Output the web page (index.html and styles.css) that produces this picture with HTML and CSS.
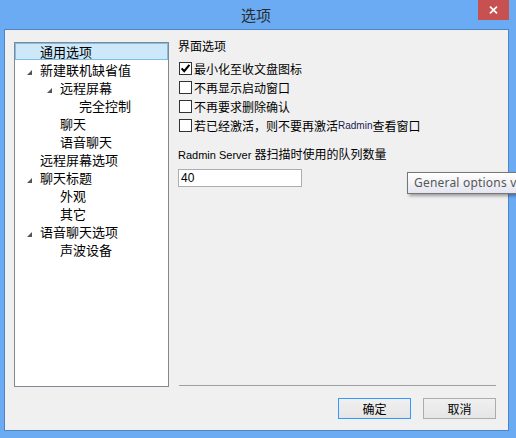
FILE: index.html
```html
<!DOCTYPE html>
<html>
<head>
<meta charset="utf-8">
<link rel="stylesheet" href="styles.css">
</head>
<body>
<div class="window">
  <div class="titlebar">
    <div class="title">选项</div>
    <div class="close"><svg width="9" height="8" viewBox="0 0 9 8"><path d="M1 0.7 L8 7.3 M8 0.7 L1 7.3" stroke="#fff" stroke-width="1.7" fill="none"/></svg></div>
  </div>
  <div class="client">
    <div class="main">
      <div class="tree">
        <div class="node lvl0 sel"><span class="exp"></span>通用选项</div>
        <div class="node lvl0"><span class="exp open"></span>新建联机缺省值</div>
        <div class="node lvl1"><span class="exp open"></span>远程屏幕</div>
        <div class="node lvl2"><span class="exp"></span>完全控制</div>
        <div class="node lvl1"><span class="exp"></span>聊天</div>
        <div class="node lvl1"><span class="exp"></span>语音聊天</div>
        <div class="node lvl0"><span class="exp"></span>远程屏幕选项</div>
        <div class="node lvl0"><span class="exp open"></span>聊天标题</div>
        <div class="node lvl1"><span class="exp"></span>外观</div>
        <div class="node lvl1"><span class="exp"></span>其它</div>
        <div class="node lvl0"><span class="exp open"></span>语音聊天选项</div>
        <div class="node lvl1"><span class="exp"></span>声波设备</div>
      </div>
      <div class="panel">
        <div class="heading">界面选项</div>
        <div class="checks">
          <div class="check"><span class="box"><svg width="11" height="11" viewBox="0 0 11 11"><path d="M1.6 5.4 L4.2 8.2 L9.4 1.8" stroke="#000" stroke-width="2.1" fill="none"/></svg></span>最小化至收文盘图标</div>
          <div class="check"><span class="box"></span>不再显示启动窗口</div>
          <div class="check"><span class="box"></span>不再要求删除确认</div>
          <div class="check"><span class="box"></span>若已经激活，则不要再激活<span class="mini">Radmin</span>查看窗口</div>
        </div>
        <div class="qlabel"><span class="latin">Radmin Server </span>器扫描时使用的队列数量</div>
        <div class="input">40</div>
        <div class="sep"></div>
      </div>
    </div>
    <div class="buttons">
      <div class="btn default">确定</div>
      <div class="btn">取消</div>
    </div>
  </div>
  <div class="tooltip">General options v</div>
</div>
</body>
</html>
```
FILE: styles.css
```css
html, body {
  margin: 0;
  padding: 0;
}
body {
  width: 516px;
  height: 438px;
  overflow: hidden;
  background: #6aabf4;
  font-family: "Noto Sans CJK SC", sans-serif;
  color: #000;
}
.window {
  position: relative;
  height: 438px;
  display: flex;
  flex-direction: column;
}
.titlebar {
  height: 29px;
  display: grid;
  grid-template-columns: 1fr auto 1fr;
  align-items: start;
}
.title {
  grid-column: 2;
  font-size: 15px;
  line-height: 15px;
  margin-top: 7px;
  margin-right: 4px;
  color: #2b2b2b;
}
.close {
  grid-column: 3;
  justify-self: end;
  width: 31px;
  height: 20px;
  margin-right: 7px;
  background: #c75050;
  display: flex;
  align-items: center;
  justify-content: center;
}
.client {
  margin: 0 7px 0 4px;
  height: 402px;
  box-sizing: border-box;
  border: 1px solid #4f85c5;
  background: #f0f0f0;
  padding: 8px 12px 0 9px;
}
.main {
  display: flex;
  align-items: flex-start;
}
.tree {
  width: 155px;
  height: 345px;
  box-sizing: border-box;
  border: 1px solid #828790;
  background: #fff;
  margin-top: 4px;
  flex: none;
}
.node {
  height: 18px;
  line-height: 18px;
  font-size: 13px;
  white-space: nowrap;
  box-sizing: border-box;
  display: flex;
}
.node.lvl0 { padding-left: 12px; }
.node.lvl1 { padding-left: 32px; }
.node.lvl2 { padding-left: 51px; }
.node.sel {
  background: #cde8f8;
  border: 1px solid #7fbde6;
  line-height: 16px;
  height: 17px;
  margin-bottom: 1px;
  padding-left: 11px;
}
.exp {
  display: block;
  width: 13px;
  flex: none;
}
.exp.open::before {
  content: "";
  display: block;
  margin-top: 9px;
  width: 0;
  height: 0;
  border-style: solid;
  border-width: 0 0 5px 5px;
  border-color: transparent transparent #555 transparent;
}
.panel {
  flex: 1;
  margin-left: 9px;
  height: 349px;
  display: flex;
  flex-direction: column;
  font-size: 12px;
}
.heading {
  line-height: 16px;
  height: 16px;
}
.checks {
  margin-top: 5px;
}
.check {
  height: 19px;
  display: flex;
  align-items: center;
  line-height: 16px;
  white-space: nowrap;
}
.box {
  width: 13px;
  height: 13px;
  box-sizing: border-box;
  border: 1px solid #333;
  background: #fff;
  margin-left: 1px;
  margin-right: 2px;
  display: flex;
  align-items: center;
  justify-content: center;
  flex: none;
}
.mini {
  font-family: "Liberation Sans", sans-serif;
  font-size: 10px;
  color: #1a1a50;
}
.qlabel {
  margin-top: 11px;
  line-height: 16px;
  height: 16px;
  white-space: nowrap;
}
.latin {
  font-family: "Liberation Sans", sans-serif;
  font-size: 11px;
}
.input {
  margin-top: 7px;
  width: 124px;
  height: 18px;
  box-sizing: border-box;
  border: 1px solid #abadb3;
  background: #fff;
  font-family: "Liberation Sans", sans-serif;
  font-size: 12px;
  line-height: 16px;
  padding-left: 2px;
}
.sep {
  margin-top: auto;
  margin-bottom: 1px;
  margin-left: 1px;
  height: 1px;
  background: #a0a0a0;
}
.buttons {
  display: flex;
  justify-content: flex-end;
  gap: 12px;
  margin-top: 11px;
}
.btn {
  width: 73px;
  height: 21px;
  box-sizing: border-box;
  border: 1px solid #acacac;
  background: linear-gradient(#f0f0f0, #e5e5e5);
  font-size: 12px;
  display: flex;
  align-items: center;
  justify-content: center;
}
.btn.default {
  border-color: #3399ff;
}
.tooltip {
  position: absolute;
  left: 407px;
  top: 172px;
  width: 200px;
  height: 22px;
  box-sizing: border-box;
  border: 1px solid #767676;
  background: linear-gradient(#ffffff, #e4e5f0);
  box-shadow: 2px 2px 3px rgba(0, 0, 0, 0.35);
  color: #575757;
  font-family: "Noto Sans", sans-serif;
  font-size: 12px;
  letter-spacing: 0.2px;
  line-height: 20px;
  padding-left: 6px;
  white-space: nowrap;
}
```
